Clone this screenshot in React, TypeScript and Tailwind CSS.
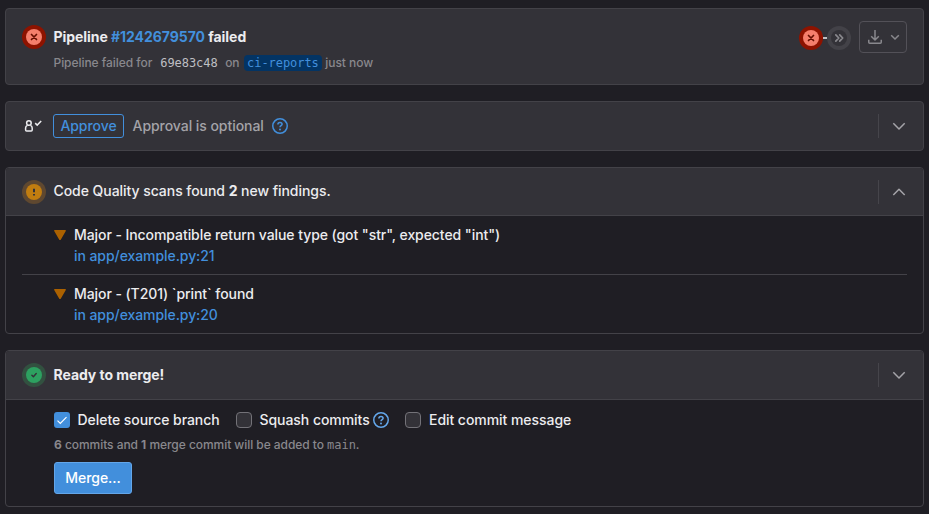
import React from "react";

const sans = "font-['Inter','Noto_Sans',sans-serif]";
const mono = "font-['DejaVu_Sans_Mono','Liberation_Mono',monospace]";

function FailedIcon() {
  return (
    <svg className="block h-6 w-6 shrink-0" viewBox="0 0 24 24" fill="none">
      <circle cx="12" cy="12" r="12" fill="#8d1300" />
      <circle cx="12" cy="12" r="8" fill="#f57f6c" />
      <path d="M9.5 9.5l5 5M14.5 9.5l-5 5" stroke="#660e00" strokeWidth="1.7" strokeLinecap="round" />
    </svg>
  );
}

function SkippedIcon() {
  return (
    <svg className="block h-6 w-6 shrink-0" viewBox="0 0 24 24" fill="none">
      <circle cx="12" cy="12" r="12" fill="#434248" />
      <circle cx="12" cy="12" r="8" fill="#333238" />
      <path d="M8.8 8.8l3 3.2-3 3.2M12.7 8.8l3 3.2-3 3.2" stroke="#89888d" strokeWidth="1.7" strokeLinecap="round" strokeLinejoin="round" />
    </svg>
  );
}

function WarningIcon() {
  return (
    <svg className="block h-6 w-6 shrink-0" viewBox="0 0 24 24" fill="none">
      <circle cx="12" cy="12" r="12" fill="#5f4830" />
      <circle cx="12" cy="12" r="8" fill="#c17d10" />
      <path d="M12 8.7v3.6" stroke="#333238" strokeWidth="2" />
      <path d="M12 13.9v1.7" stroke="#333238" strokeWidth="2" />
    </svg>
  );
}

function SuccessIcon() {
  return (
    <svg className="block h-6 w-6 shrink-0" viewBox="0 0 24 24" fill="none">
      <circle cx="12" cy="12" r="12" fill="#325140" />
      <circle cx="12" cy="12" r="8" fill="#2da160" />
      <path d="M9.9 12.2l1.5 1.5 2.8-3.1" stroke="#333238" strokeWidth="1.5" strokeLinecap="round" strokeLinejoin="round" />
    </svg>
  );
}

function HelpIcon({ color }: { color: string }) {
  return (
    <svg className="block h-4 w-4 shrink-0" viewBox="0 0 16 16" fill="none" stroke={color}>
      <circle cx="8" cy="8" r="7.25" strokeWidth="1.5" />
      <path d="M5.9 6.4C5.9 5.1 6.8 4.4 8 4.4s2.1.8 2.1 1.9c0 1.3-2.1 1.5-2.1 3" strokeWidth="1.5" />
      <circle cx="8" cy="11.5" r="1" fill={color} stroke="none" />
    </svg>
  );
}

function Toggle({ up = false }: { up?: boolean }) {
  return (
    <div className="ml-auto flex h-6 items-center border-l border-[#46454b] pl-3">
      <svg className="block h-4 w-4" viewBox="0 0 16 16" fill="none" stroke="#a4a3a8" strokeWidth="1.5">
        <path d={up ? "M2.3 11L8 5.2 13.7 11" : "M2.3 5.2L8 11l5.7-5.8"} strokeLinejoin="round" />
      </svg>
    </div>
  );
}

function Finding({ title, place }: { title: React.ReactNode; place: string }) {
  return (
    <div className="flex pl-8">
      <svg className="mt-[5px] mr-2 block h-3 w-3 shrink-0" viewBox="0 0 12 12">
        <path d="M.8 1h10.4c.6 0 .9.5.6 1L6.9 10.4c-.4.7-1.4.7-1.8 0L.2 2C-.1 1.5.2 1 .8 1z" fill="#ab6100" />
      </svg>
      <div className="flex flex-col leading-[21px] tracking-[-0.07px] whitespace-nowrap">
        <span>{title}</span>
        <a className="text-[#428fdc]">{place}</a>
      </div>
    </div>
  );
}

function Checkbox({ checked = false }: { checked?: boolean }) {
  return checked ? (
    <span className="block h-4 w-4 rounded-[3px] bg-[#428fdc]">
      <svg className="block h-4 w-4" viewBox="0 0 16 16" fill="none">
        <path d="M3.5 8.6l2.8 2.8 6.2-6.3" stroke="#fff" strokeWidth="1.2" />
      </svg>
    </span>
  ) : (
    <span className="block h-4 w-4 rounded-[4px] border border-[#737278] bg-[#333238]" />
  );
}

export default function App() {
  return (
    <div className={`${sans} h-[514px] w-[929px] overflow-hidden bg-[#1f1e24] pt-2 pl-[5px] text-[14px] font-[450] tracking-[-0.05px] text-[#ececef]`}>
      <div className="flex w-[919px] flex-col gap-4">
        <section className="flex h-[77px] rounded border border-[#434248] bg-[#333238] pr-4 pl-4">
          <div className="mt-4"><FailedIcon /></div>
          <div className="ml-[7.5px] pt-[18px] whitespace-nowrap">
            <div className="h-5 text-[14px] leading-5 font-bold tracking-[-0.05px]">
              Pipeline <a className="text-[#428fdc]">#1242679570</a> failed
            </div>
            <div className="mt-2 flex h-4 items-center text-[12px] leading-4 text-[#89888d]">
              <span>Pipeline failed for</span>
              <span className={`${mono} ml-2 text-[12px] tracking-[-0.05px] text-[#bfbfc3]`}>69e83c48</span>
              <span className="ml-[7.5px]">on</span>
              <span className={`${mono} ml-1 flex h-4 items-center rounded bg-[#033464] px-[3.5px] text-[12px] tracking-[-0.05px] text-[#428fdc]`}>ci-reports</span>
              <span className="ml-[3px]">just now</span>
            </div>
          </div>
          <div className="ml-auto flex h-8 items-center pt-[25px]">
            <FailedIcon />
            <span className="h-0.5 w-1 bg-[#bfbfc3]" />
            <SkippedIcon />
          </div>
          <div className="mt-3 ml-2 flex h-8 w-12 items-center rounded border border-[#535158] pl-[7px]">
            <svg className="block h-4 w-4" viewBox="0 0 16 16" fill="none" stroke="#89888d" strokeWidth="1.5">
              <path d="M8 1v9.5M4.2 7.2L8 11l3.8-3.8M1.75 10.8v2.4c0 .6.4 1 1 1h10.5c.6 0 1-.4 1-1v-2.4" strokeLinejoin="round" />
            </svg>
            <svg className="ml-[6px] block h-3 w-3" viewBox="0 0 12 12" fill="none" stroke="#89888d" strokeWidth="1.5">
              <path d="M2.2 4.2L6 8l3.8-3.8" />
            </svg>
          </div>
        </section>

        <section className="flex h-[50px] items-center rounded border border-[#434248] bg-[#333238] pr-4 pl-[17px]">
          <svg className="block h-4 w-5 shrink-0" viewBox="0 0 20 16" fill="none" stroke="#ececef" strokeWidth="1.5">
            <circle cx="5.9" cy="5" r="2.3" />
            <path d="M4.4 7.4C3.2 7.8 2.6 8.8 2.6 10v2.1c0 .6.4 1 1 1h4.6c.6 0 1-.4 1-1V10c0-1.2-.6-2.2-1.8-2.6" />
            <path d="M12.2 5.1l2 2L18.2 3" />
          </svg>
          <button className="ml-[10px] flex h-6 w-[71px] items-center justify-center rounded-[3px] border border-[#428fdc] pb-0.5 text-[14px] text-[#428fdc]">Approve</button>
          <span className="ml-[8.5px] w-[131.5px] pb-px whitespace-nowrap text-[#a4a3a8]">Approval is optional</span>
          <span className="ml-2"><HelpIcon color="#428fdc" /></span>
          <Toggle />
        </section>

        <section className="h-[167px] overflow-hidden rounded border border-[#434248]">
          <div className="flex h-12 items-center border-b border-[#434248] bg-[#333238] px-4">
            <WarningIcon />
            <span className="ml-[7.5px] pb-0.5 whitespace-nowrap">Code Quality scans found <b>2</b> new findings.</span>
            <Toggle up />
          </div>
          <div className="px-4">
            <div className="h-[59px] border-b border-[#434248] pt-2">
              <Finding title={'Major - Incompatible return value type (got "str", expected "int")'} place="in app/example.py:21" />
            </div>
            <div className="pt-2">
              <Finding title="Major - (T201) `print` found" place="in app/example.py:20" />
            </div>
          </div>
        </section>

        <section className="h-[157px] overflow-hidden rounded border border-[#434248]">
          <div className="flex h-[49px] items-center border-b border-[#434248] bg-[#333238] px-4">
            <SuccessIcon />
            <span className="ml-[7.5px] pb-0.5 font-bold tracking-[-0.06px] whitespace-nowrap">Ready to merge!</span>
            <Toggle />
          </div>
          <div className="pt-3 pl-12 whitespace-nowrap">
            <div className="flex h-4 items-center">
              <Checkbox checked />
              <span className="ml-[7.5px] w-[158.5px] pb-0.5">Delete source branch</span>
              <Checkbox />
              <span className="ml-[7.5px] w-[113.5px] pb-0.5">Squash commits</span>
              <HelpIcon color="#63a6e9" />
              <span className="ml-4"><Checkbox /></span>
              <span className="ml-2 pb-0.5">Edit commit message</span>
            </div>
            <div className="mt-[9px] h-4 text-[12px] leading-4 text-[#89888d]">
              <b>6</b> commits and <b>1</b> merge commit will be added to <span className={mono}>main</span>.
            </div>
            <button className="mt-[9px] flex h-8 w-[78px] items-center justify-center rounded-[3px] border border-[#63a6e9] bg-[#428fdc] pb-0.5 text-[14px] text-white">Merge...</button>
          </div>
        </section>
      </div>
    </div>
  );
}
